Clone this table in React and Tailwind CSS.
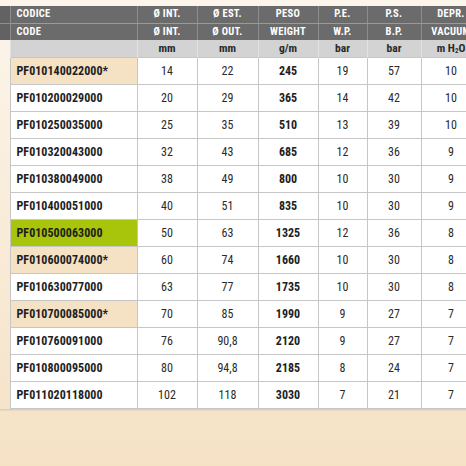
const rows = [
    {code: "PF010140022000*", int: "14", est: "22", peso: "245", pe: "19", ps: "57", depr: "10", tone: "tan"},
    {code: "PF010200029000", int: "20", est: "29", peso: "365", pe: "14", ps: "42", depr: "10"},
    {code: "PF010250035000", int: "25", est: "35", peso: "510", pe: "13", ps: "39", depr: "10"},
    {code: "PF010320043000", int: "32", est: "43", peso: "685", pe: "12", ps: "36", depr: "9"},
    {code: "PF010380049000", int: "38", est: "49", peso: "800", pe: "10", ps: "30", depr: "9"},
    {code: "PF010400051000", int: "40", est: "51", peso: "835", pe: "10", ps: "30", depr: "9"},
    {code: "PF010500063000", int: "50", est: "63", peso: "1325", pe: "12", ps: "36", depr: "8", tone: "lime"},
    {code: "PF010600074000*", int: "60", est: "74", peso: "1660", pe: "10", ps: "30", depr: "8", tone: "tan"},
    {code: "PF010630077000", int: "63", est: "77", peso: "1735", pe: "10", ps: "30", depr: "8"},
    {code: "PF010700085000*", int: "70", est: "85", peso: "1990", pe: "9", ps: "27", depr: "7", tone: "tan"},
    {code: "PF010760091000", int: "76", est: "90,8", peso: "2120", pe: "9", ps: "27", depr: "7"},
    {code: "PF010800095000", int: "80", est: "94,8", peso: "2185", pe: "8", ps: "24", depr: "7"},
    {code: "PF011020118000", int: "102", est: "118", peso: "3030", pe: "7", ps: "21", depr: "7"},
];

const headIt = ["CODICE", "Ø INT.", "Ø EST.", "PESO", "P.E.", "P.S.", "DEPR."];
const headEn = ["CODE", "Ø INT.", "Ø OUT.", "WEIGHT", "W.P.", "B.P.", "VACUUM"];

const codeBg = {
    tan: "bg-[#f5e1c4]",
    lime: "bg-[#a8c40b]",
};

function HeadRow({labels, last}) {
    return (
        <tr className="h-[17px]">
            <td className={"bg-[#626262] p-0 " + (last ? "" : "border-b border-b-[#8f8f8f]")} />
            {labels.map((label, i) => (
                <td
                    key={i}
                    className={
                        "bg-[#6b6b6b] text-white font-bold text-[10.5px] leading-none p-0 border-x border-[#8c8c8c] tracking-[0.3px] whitespace-nowrap " +
                        (i === 0 ? "text-left pl-[6px] " : "text-center ") +
                        (last ? "" : "border-b border-b-[#9a9a9a]")
                    }>
                    {label}
                </td>
            ))}
        </tr>
    );
}

export default function App() {
    return (
        <div className="w-[466px] h-[466px] overflow-hidden bg-gradient-to-b from-[#fcf5ec] to-[#f5e2c5] pt-[6px] font-['Roboto',sans-serif] font-stretch-condensed">
            <table className="table-fixed border-collapse w-[481px] shadow-[0_1px_2px_rgba(0,0,0,0.15)]">
                <colgroup>
                    <col className="w-[10px]" />
                    <col className="w-[127px]" />
                    <col className="w-[60px]" />
                    <col className="w-[61px]" />
                    <col className="w-[60px]" />
                    <col className="w-[49px]" />
                    <col className="w-[54px]" />
                    <col className="w-[60px]" />
                </colgroup>
                <tbody>
                    <HeadRow labels={headIt} />
                    <HeadRow labels={headEn} last />
                    <tr className="h-[17px]">
                        <td className="p-0" />
                        {["", "mm", "mm", "g/m", "bar", "bar"].map((u, i) => (
                            <td key={i} className="bg-[#d3d3d3] text-[#2a2a2a] font-bold text-[11.5px] leading-none text-center p-0 border-x border-[#e2e2e2]">
                                {u}
                            </td>
                        ))}
                        <td className="bg-[#d3d3d3] text-[#2a2a2a] font-bold text-[11.5px] leading-none text-center p-0 border-x border-[#e2e2e2] whitespace-nowrap">
                            m H<sub className="text-[7px]">2</sub>O
                        </td>
                    </tr>
                    {rows.map((r) => (
                        <tr key={r.code} className="h-[27px]">
                            <td className="p-0" />
                            <td className={"border border-[#c6c6c6] pl-[6px] p-0 text-left font-bold text-[12px] text-[#1e1e1e] tracking-[0.05px] " + (codeBg[r.tone] || "bg-white")}>
                                {r.code}
                            </td>
                            <td className="border border-[#c6c6c6] bg-white p-0 text-center text-[12px] text-[#2a2a2a]">{r.int}</td>
                            <td className="border border-[#c6c6c6] bg-white p-0 text-center text-[12px] text-[#2a2a2a]">{r.est}</td>
                            <td className="border border-[#c6c6c6] bg-white p-0 text-center font-bold text-[12px] text-[#1e1e1e]">{r.peso}</td>
                            <td className="border border-[#c6c6c6] bg-white p-0 text-center text-[12px] text-[#2a2a2a]">{r.pe}</td>
                            <td className="border border-[#c6c6c6] bg-white p-0 text-center text-[12px] text-[#2a2a2a]">{r.ps}</td>
                            <td className="border border-[#c6c6c6] bg-white p-0 text-center text-[12px] text-[#2a2a2a]">{r.depr}</td>
                        </tr>
                    ))}
                </tbody>
            </table>
        </div>
    );
}
